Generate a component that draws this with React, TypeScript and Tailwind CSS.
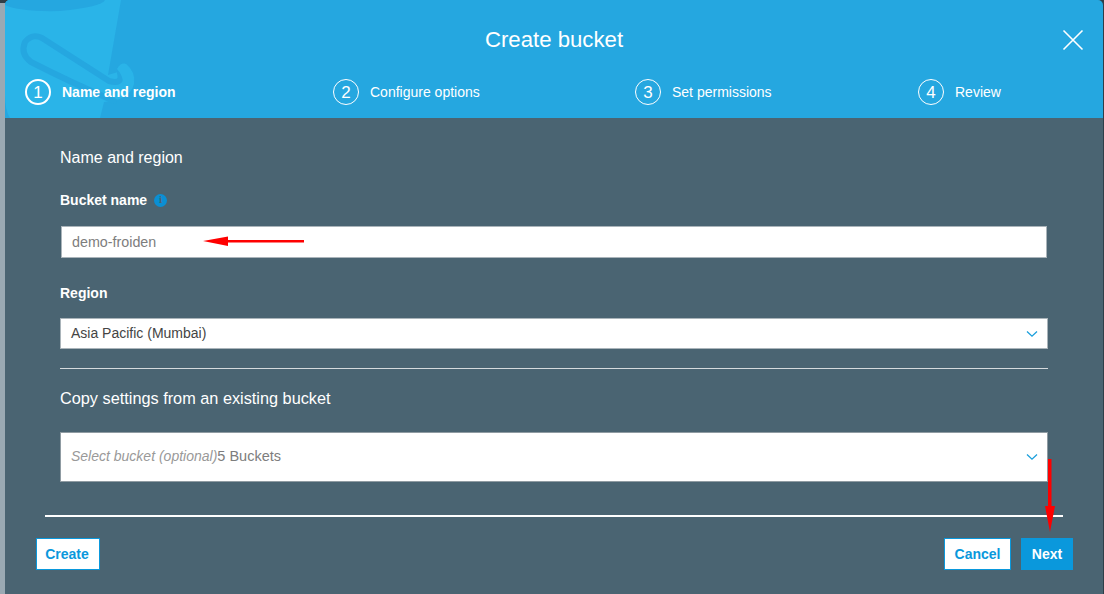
import React from "react";

const font = { fontFamily: '"Liberation Sans", Arial, sans-serif' };

function Step({ n, label, active, w }: { n: number; label: string; active?: boolean; w: string }) {
  return (
    <div className={`flex items-center ${w}`}>
      <div
        className={`flex h-[26px] w-[26px] items-center justify-center rounded-full border-white text-[17px] font-light leading-none text-white ${
          active ? "border-2" : "border"
        }`}
      >
        {n}
      </div>
      <span className={`ml-[11px] text-[14px] text-white ${active ? "font-bold" : ""}`}>{label}</span>
    </div>
  );
}

function Chevron() {
  return (
    <svg width="12" height="8" viewBox="0 0 12 8" fill="none" stroke="#1a9fdc" strokeWidth="1.3">
      <path d="M1 1.5 L6 6.2 L11 1.5" />
    </svg>
  );
}

export default function App() {
  return (
    <div className="relative flex h-[594px] w-[1104px] overflow-hidden bg-[#2f3e48]" style={font}>
      <div className="mt-[3px] w-[5px] shrink-0 bg-[#9aa9b3]" />
      <div className="flex min-w-0 flex-1 flex-col">
        <header className="relative h-[118px] shrink-0 overflow-hidden rounded-t-[5px] bg-[#25a7e0]">
          <svg className="absolute left-[-5px] top-0" width="140" height="118" viewBox="0 0 140 118">
            <path d="M5 0 H121 L108 75 L118 72 Q120 62 126 64 Q136 72 134 84 Q130 100 104 102 L100 118 H10 Q5 110 5 95 Z" fill="#2ab4e8" />
            <path d="M5 0 H105 Q102 7 60 11 Q20 12 5 5 Z" fill="#25a7e0" />
            <path
              d="M120 73 Q123 85 109 81 L42 38 Q32 33 25 42 Q20 54 31 62 Q70 82 114 101"
              fill="none"
              stroke="#25a7e0"
              strokeWidth="6"
              strokeLinecap="round"
              strokeLinejoin="round"
            />
            <path d="M117 69 Q121 62 126 64 Q134 71 134 84 L123 84 Q123 75 117 69 Z" fill="#2ab4e8" />
          </svg>
          <h1 className="relative pt-[27px] text-center text-[22.2px] font-normal leading-[26px] text-white">
            Create bucket
          </h1>
          <svg className="absolute left-[1057px] top-[29px]" width="22" height="22" viewBox="0 0 22 22" stroke="white" strokeWidth="1.6" fill="none">
            <path d="M1.5 1.5 L20.5 20.5 M20.5 1.5 L1.5 20.5" />
          </svg>
          <div className="relative mt-[26px] flex pl-[20px]">
            <Step n={1} label="Name and region" active w="w-[308px]" />
            <Step n={2} label="Configure options" w="w-[302px]" />
            <Step n={3} label="Set permissions" w="w-[283px]" />
            <Step n={4} label="Review" w="w-[100px]" />
          </div>
        </header>

        <main className="flex flex-1 flex-col bg-[#4a6472]">
          <div className="flex flex-col pl-[55px] pr-[55px]">
            <h2 className="mt-[31px] text-[16px] font-normal leading-[18px] text-white">Name and region</h2>
            <label className="mt-[25px] flex items-center text-[14px] font-bold leading-[16px] text-white">
              Bucket name
              <span className="ml-[7px] flex h-[13px] w-[13px] items-center justify-center rounded-full bg-[#0a8fd4] font-serif text-[10px] font-bold text-[#4a6472]">
                i
              </span>
            </label>
            <div className="ml-[1px] mr-[1px] mt-[18px] flex h-[32px] items-center border border-[#aab4ba] bg-white pl-[10px] pt-[1px] text-[14.3px] text-[#7d7d7d]">
              demo-froiden
            </div>
            <label className="mt-[27px] text-[14px] font-bold leading-[16px] text-white">Region</label>
            <div className="mt-[17px] flex h-[31px] items-center justify-between border border-[#aab4ba] bg-white pl-[10px] pr-[9px] text-[14px] text-[#444444]">
              Asia Pacific (Mumbai)
              <Chevron />
            </div>
            <div className="mt-[19px] h-px bg-[#d5dadd]" />
            <h2 className="mt-[20px] text-[16.3px] font-normal leading-[18px] text-white">
              Copy settings from an existing bucket
            </h2>
            <div className="mt-[25px] flex h-[50px] items-center justify-between border border-[#8f9ba2] bg-white pl-[10px] pr-[9px]">
              <span className="pb-[2px]">
                <em className="text-[14px] text-[#999999]">Select bucket (optional)</em>
                <span className="text-[14.5px] text-[#7d7d7d]">5 Buckets</span>
              </span>
              <Chevron />
            </div>
          </div>
          <div className="ml-[40px] mr-[40px] mt-[33px] h-[2px] bg-white" />
          <footer className="mt-[21px] flex items-center pl-[31px] pr-[30px]">
            <button className="h-[32px] w-[64px] border border-[#0a98dc] bg-white pr-[2px] text-[14px] font-bold text-[#0a98dc]">
              Create
            </button>
            <button className="ml-auto h-[32px] w-[67px] border border-[#0a98dc] bg-white text-[14px] font-bold text-[#0a98dc]">
              Cancel
            </button>
            <button className="ml-[10px] h-[32px] w-[52px] bg-[#0a98dc] text-[14px] font-bold text-white">
              Next
            </button>
          </footer>
        </main>
      </div>
      <div className="w-px shrink-0" />

      <svg className="pointer-events-none absolute left-0 top-0" width="1104" height="594" viewBox="0 0 1104 594">
        <path d="M304 240 L228 240 L228 236.5 L203 241 L228 246 L228 242.5 L304 242.5 Z" fill="#fe0000" />
        <path d="M1048 459 H1051.5 V506 H1055 L1050 532 L1045 506 H1048 Z" fill="#fe0000" />
      </svg>
    </div>
  );
}
